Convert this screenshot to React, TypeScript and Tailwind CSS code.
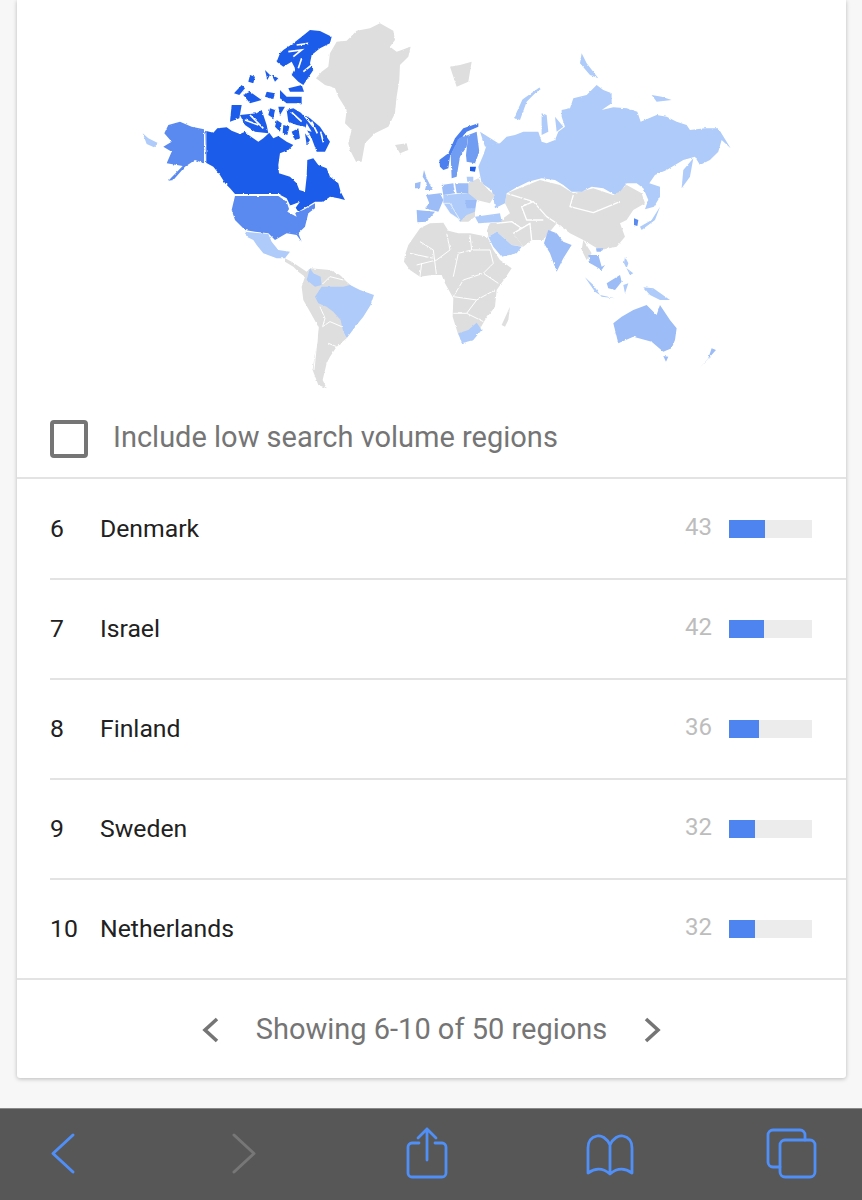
import React from "react";

const PALE = "#aecbfa";
const MID = "#9bbcf7";
const STRONG = "#5a8af0";
const DEEP = "#1f5ceb";
const GREY = "#dedede";

interface Region {
  name: string;
  value: number;
  rank: number;
  bar: string;
}

const regions: Region[] = [
  { rank: 6, name: "Denmark", value: 43, bar: "w-[36px]" },
  { rank: 7, name: "Israel", value: 42, bar: "w-[35px]" },
  { rank: 8, name: "Finland", value: 36, bar: "w-[30px]" },
  { rank: 9, name: "Sweden", value: 32, bar: "w-[26px]" },
  { rank: 10, name: "Netherlands", value: 32, bar: "w-[26px]" },
];

const WorldMap = () => (
  <svg viewBox="17 0 829 400" className="block h-[400px] w-[829px]">
    <defs>
      {/* roughens the hand traced coasts a bit */}
      <filter id="coast" x="-5%" y="-5%" width="110%" height="110%">
        <feTurbulence type="fractalNoise" baseFrequency="0.28" numOctaves="2" seed="4" result="noise" />
        <feDisplacementMap in="SourceGraphic" in2="noise" scale="2.2" xChannelSelector="R" yChannelSelector="G" />
        <feGaussianBlur stdDeviation="0.3" />
      </filter>
    </defs>
    <g filter="url(#coast)">
      {/* americas, traced in crop coordinates */}
      <g transform="translate(130 10) scale(0.3333)" strokeLinejoin="round">
        <g fill={GREY}>
          <path d="M620 95L650 92 680 62 720 55 750 40 790 62 795 90 780 110 800 125 842 110 835 140 810 165 808 210 800 260 795 310 775 350 735 370 705 400 695 455 678 455 660 420 655 400 665 360 645 340 650 300 625 260 615 235 585 225 558 205 575 185 595 170 600 130Z" />
          <path d="M795 405L830 400 835 420 810 430Z" />
          <path d="M465 745L485 755 500 765 530 785 540 775 600 780 630 795 650 815 680 840 660 880 640 965 650 985 620 1010 600 1040 590 1060 578 1110 590 1135 565 1125 548 1080 555 1030 562 1000 565 950 540 905 520 870 515 830 525 800 505 785 490 770 465 755Z" />
        </g>
        <path d="M570 890L585 925 578 950 600 935 635 950M565 950L552 1080M595 1000L620 1010M575 825L600 800 640 810" stroke="#fff" strokeWidth="3" fill="none" />
        <g fill={PALE}>
          <path d="M38 370L55 385 85 400 72 412 50 402Z" />
          <path d="M345 665L375 668 415 672 425 695 445 720 480 725 465 745 440 745 400 730 380 705 370 690 350 680Z" />
          <path d="M555 860L575 830 640 830 660 825 690 840 732 855 722 885 700 920 680 945 650 985 640 965 632 930 610 905 590 890 565 880Z" />
          <path d="M540 775L530 810 555 830 575 825 572 800 550 790Z" />
        </g>
        <g fill={STRONG}>
          <path d="M115 345L150 335 185 350 222 358 222 460 195 450 165 470 130 510 115 512 158 468 110 460 125 425 100 410 125 395 103 370Z" />
          <path d="M315 558L445 558 470 575 480 605 500 607 520 600 555 580 555 595 535 610 525 650 505 670 515 695 500 675 470 670 435 690 415 670 375 665 345 660 315 630 305 600Z" />
        </g>
        <path fill={DEEP} d="M226 362L250 368 262 355 290 352 305 362 330 372 345 365 360 378 385 395 400 385 418 368 430 385 445 378 470 395 490 405 475 420 450 430 445 465 447 490 480 500 500 520 508 540 525 545 530 500 532 450 550 445 565 465 590 475 600 500 625 520 632 545 645 570 625 565 600 560 580 575 555 575 530 590 505 605 495 590 480 585 470 565 445 552 315 552 300 535 285 520 270 495 250 470 228 458Z" />
        <path d="M500 620L472 605 485 585 510 575 492 600Z" fill="#fff" />
        <path d="M228 360V458M315 554H445" stroke="#fff" strokeOpacity="0.6" strokeWidth="3" fill="none" />
      </g>

      {/* arctic islands */}
      <g transform="translate(230 25) scale(0.3333)" fill={DEEP}>
        <path d="M160 75L190 55 215 35 240 15 270 18 305 35 300 55 270 70 245 90 240 115 250 135 240 150 220 180 205 170 185 150 195 130 185 110 160 125 140 110 150 85Z" />
        <path d="M175 190L215 180 222 200 180 200Z" />
        <path d="M12 205L35 180 45 190 28 210Z" />
        <path d="M40 210L60 200 95 225 60 235Z" />
        <path d="M105 135L120 150 112 165Z" />
        <path d="M125 150L145 160 135 170Z" />
        <path d="M60 150L75 155 70 175 55 170Z" />
        <path d="M110 200L135 205 130 222 105 215Z" />
        <path d="M150 195L170 215 215 215 215 235 170 235 150 220Z" />
        <path d="M5 240L35 240 28 280 0 290Z" />
        <path d="M30 270L80 265 95 255 110 300 115 325 75 320 45 300Z" />
        <path d="M120 250L135 255 130 280 115 270Z" />
        <path d="M145 245L165 245 150 270Z" />
        <path d="M140 285L155 295 150 320 135 305Z" />
        <path d="M170 255L190 250 240 280 270 305 300 350 285 380 260 380 245 340 225 305 200 300 175 290Z" />
        <path d="M185 320L205 310 210 340 195 345Z" />
        <path d="M160 300L178 305 172 330 158 325Z" />
        <path d="M225 325L240 345 230 360Z" />
        <path d="M175 80L215 75 190 95M215 100L205 130M200 60L235 55M220 140L245 120" stroke="#fff" strokeWidth="5" fill="none" />
        <path d="M185 262L215 290M215 262L250 305M245 290L262 325M272 320L280 352" stroke="#fff" strokeWidth="5" fill="none" />
        <path d="M45 285L85 300M60 270L100 310" stroke="#fff" strokeWidth="5" fill="none" />
        <path d="M230 295L245 320 225 315Z" fill="#fff" />
      </g>

      {/* rest of the world */}
      <g transform="translate(400 20) scale(0.3333)" strokeLinejoin="round">
        <g fill={GREY}>
          <path d="M150 140L180 135 215 125 205 185 170 200 160 170Z" />
          <path d="M15 705L25 675 60 625 90 610 130 608 145 632 175 640 210 640 262 650 280 690 300 720 335 745 315 775 290 810 285 860 255 900 235 935 195 968 175 945 158 890 160 835 135 790 125 765 95 765 60 770 30 750 12 725Z" />
          <path d="M305 915L330 860 325 900 315 920Z" />
          <path d="M320 520L420 480 480 495 520 520 580 505 640 525 680 495 725 520 735 550 700 570 680 600 660 610 675 650 650 680 600 690 550 660 510 640 470 610 430 660 395 660 370 680 340 640 290 610 330 580 315 550Z" />
          <path d="M550 660L575 700 560 720 545 690Z" />
          <path d="M270 610L305 605 340 640 370 680 335 675 290 635 265 650 262 625Z" />
          <path d="M0 95L30 80 15 115 0 130Z" />
          <path d="M0 385L22 372 0 402Z" />
        </g>
        <path d="M60 665L100 690 110 770M140 640L150 690 110 720M210 645L215 690 175 700 160 770M215 690L270 690 280 730 250 760 190 780 160 830 230 840 285 810M230 840L200 880 160 880M200 880L250 905M30 700L100 715M65 730L60 770M250 760L295 790M110 720L50 735" stroke="#fff" strokeWidth="3" fill="none" />
        <path d="M320 520L400 545 440 590 470 610M520 525L510 560 580 578 660 545M400 545L365 560 380 600 430 600M340 640L390 610 395 660M290 610L335 605 365 625" stroke="#fff" strokeWidth="4" fill="none" />
        <g fill={PALE}>
          <path d="M235 440L250 405 260 375 300 370 320 350 345 345 370 335 415 335 425 365 440 370 465 360 475 335 495 320 485 290 485 270 510 265 520 235 560 225 590 195 610 210 635 220 635 250 605 270 640 262 680 265 712 275 722 305 770 285 800 290 830 305 860 315 870 330 915 325 955 325 992 385 965 360 955 395 930 420 900 435 885 410 850 420 800 450 765 465 748 490 780 500 780 530 762 560 735 568 745 540 730 505 710 490 680 490 660 515 640 522 610 505 575 500 545 515 515 515 490 495 465 480 425 475 385 485 345 505 320 520 315 550 285 565 280 530 275 510 245 490Z" />
          <path d="M420 205L370 240 345 295 360 300 380 245Z" />
          <path d="M425 280L440 285 445 335 425 345Z" />
          <path d="M465 290L490 320 470 335Z" />
          <path d="M545 100L560 130 595 175 570 165 540 130Z" />
          <path d="M755 225L785 230 815 240 770 245Z" />
          <path d="M880 415L850 450 845 505 870 470Z" />
          <path d="M265 650L290 635 335 675 365 680 350 700 305 710 280 680Z" />
          <path d="M175 940L205 930 230 908 245 930 220 960 185 970Z" />
        </g>
        <path d="M420 205L370 240 345 295" stroke={PALE} strokeWidth="6" fill="none" />
        <g fill={MID}>
          <path d="M445 630L470 640 490 665 515 675 490 715 470 755 450 700 432 670Z" />
          <path d="M640 910L665 890 700 870 740 855 770 885 780 855 810 900 830 925 825 960 815 985 790 995 755 965 700 950 655 970Z" />
          <path d="M790 1008L805 1010 798 1025Z" />
          <path d="M898 1045L930 1010 948 990 935 985 925 1015Z" />
        </g>
      </g>

      {/* europe */}
      <g transform="translate(410 115) scale(0.3333)">
        <path fill={GREY} d="M175 205L205 190 235 225 255 240 240 265 200 255 170 240Z" />
        <path fill={GREY} d="M150 300L195 285 195 305 175 320 150 320Z" />
        <g fill={PALE}>
          <path d="M100 240L175 235 200 255 195 290 170 300 150 320 130 285 100 265Z" />
          <path d="M195 305L270 295 275 320 205 325Z" />
          <path d="M210 50L265 85 225 95Z" />
          <path d="M170 185L190 185 190 200 172 200Z" />
        </g>
        <g fill={MID}>
          <path d="M42 165L50 190 68 225 45 225 50 205 38 185Z" />
          <path d="M15 205L32 200 30 220 15 220Z" />
          <path d="M48 240L90 235 100 255 85 290 45 280 58 265Z" />
          <path d="M20 285L75 290 50 320 22 322Z" />
          <path d="M95 210L130 205 135 235 100 240Z" />
          <path d="M135 205L175 205 175 235 140 235Z" />
          <path d="M165 255L200 255 195 280 170 280Z" />
        </g>
        <path d="M100 265L120 265 150 315 120 295Z" fill={PALE} stroke="#fff" strokeWidth="2" />
        <path d="M88 135L115 115 135 70 160 40 205 25 205 35 170 50 140 85 120 125 115 160 100 165 90 155Z" fill="#4c7ff0" />
        <path d="M122 120L145 70 175 60 170 95 150 125 140 185 125 190Z" fill="#6f9cf2" />
        <path d="M175 60L200 50 208 110 195 145 170 140 168 120Z" fill="#6f9cf2" />
        <path d="M180 155L198 155 195 170 180 168Z" fill={DEEP} />
      </g>

      {/* south east asia */}
      <g transform="translate(560 200) scale(0.3333)">
        <g fill={PALE}>
          <path d="M300 20L285 60 245 90 240 80 275 60Z" />
          <path d="M75 232L100 255 120 285 105 275Z" />
          <path d="M120 285L165 295 125 290Z" />
          <path d="M190 255L205 250 195 280Z" />
          <path d="M195 170L205 190 200 205 220 220 210 225 192 190Z" />
          <path d="M250 262L280 265 330 300 300 300 270 285Z" />
        </g>
        <g fill={MID}>
          <path d="M85 165L115 165 125 200 135 195 125 210 100 195 90 190Z" />
          <path d="M140 250L180 225 185 245 165 270 145 265Z" />
          <path d="M108 145L130 145 125 155 110 155Z" />
        </g>
        <path d="M222 55L235 60 232 78 222 75Z" fill={STRONG} />
      </g>
    </g>
  </svg>
);

const RegionRow = ({ rank, name, value, bar }: Region) => (
  <div className="ml-[33px] flex h-[100px] items-center border-b-2 border-[#e3e3e3] pr-[34px] text-[24.75px] text-[#212121]">
    <span className="w-[50px]">{rank}</span>
    <span className="flex-1">{name}</span>
    <span className="mr-[17px] -translate-y-[2px] text-[24px] text-[#bdbdbd]">{value}</span>
    <div className="h-[18px] w-[83px] bg-[#ececec]">
      <div className={`h-full bg-[#4d84f0] ${bar}`} />
    </div>
  </div>
);

export default function App() {
  return (
    <div className="flex h-[1200px] w-[862px] flex-col overflow-hidden bg-[#f7f7f7] font-['Roboto',sans-serif]">
      <div className="mx-[17px] h-[1078px] w-[829px] rounded-b-[3px] bg-white shadow-[0_1px_4px_rgba(0,0,0,0.25)]">
        <WorldMap />

        <div className="flex h-[79px] items-center border-b-2 border-[#e3e3e3] pl-[33px]">
          <div className="h-[38px] w-[38px] rounded-[4px] border-4 border-[#757575]" />
          <span className="ml-[25px] -translate-y-px text-[29px] text-[#757575]">Include low search volume regions</span>
        </div>

        <div className="pt-px">
          {regions.map((region) => (
            <RegionRow key={region.rank} {...region} />
          ))}
        </div>

        <div className="-mt-[2px] flex h-[100px] items-center justify-center gap-[36px] border-t-2 border-[#e3e3e3] pt-[2px] text-[29px] text-[#757575]">
          <svg width="20" height="26" viewBox="0 0 20 26" fill="none" stroke="#757575" strokeWidth="3.6">
            <path d="M17 2L5 13l12 11" />
          </svg>
          <span>Showing 6-10 of 50 regions</span>
          <svg width="20" height="26" viewBox="0 0 20 26" fill="none" stroke="#757575" strokeWidth="3.6">
            <path d="M3 2l12 11L3 24" />
          </svg>
        </div>
      </div>

      {/* safari toolbar */}
      <div className="mt-[30px] h-[92px] w-full border-t border-[#8a8a8a] bg-[#575757]">
        <svg width="862" height="91" viewBox="0 1109 862 91" fill="none" strokeLinecap="round" strokeLinejoin="round">
          <path d="M73 1135L53 1153.5 73 1172" stroke="#4f8ff7" strokeWidth="3" />
          <path d="M234 1135L254 1153.5 234 1172" stroke="#777" strokeWidth="3" />
          <g stroke="#4f8ff7" strokeWidth="2.8">
            <path d="M419 1143H412a4 4 0 0 0-4 4v26a4 4 0 0 0 4 4h30a4 4 0 0 0 4-4v-26a4 4 0 0 0-4-4h-7" />
            <path d="M427 1160V1129M418 1138l9-9 9 9" />
            <path d="M610 1145c-3-7-9-10-13-9-5 1-9 4-9 12v25c7-5 15-5 22 1 7-6 15-6 22-1v-25c0-8-4-11-9-12-4-1-10 2-13 9v28" />
            <path d="M780 1167h-7a5 5 0 0 1-5-5v-27a5 5 0 0 1 5-5h27a5 5 0 0 1 5 5v5" />
            <rect x="780" y="1140" width="35" height="37" rx="5" />
          </g>
        </svg>
      </div>
    </div>
  );
}
